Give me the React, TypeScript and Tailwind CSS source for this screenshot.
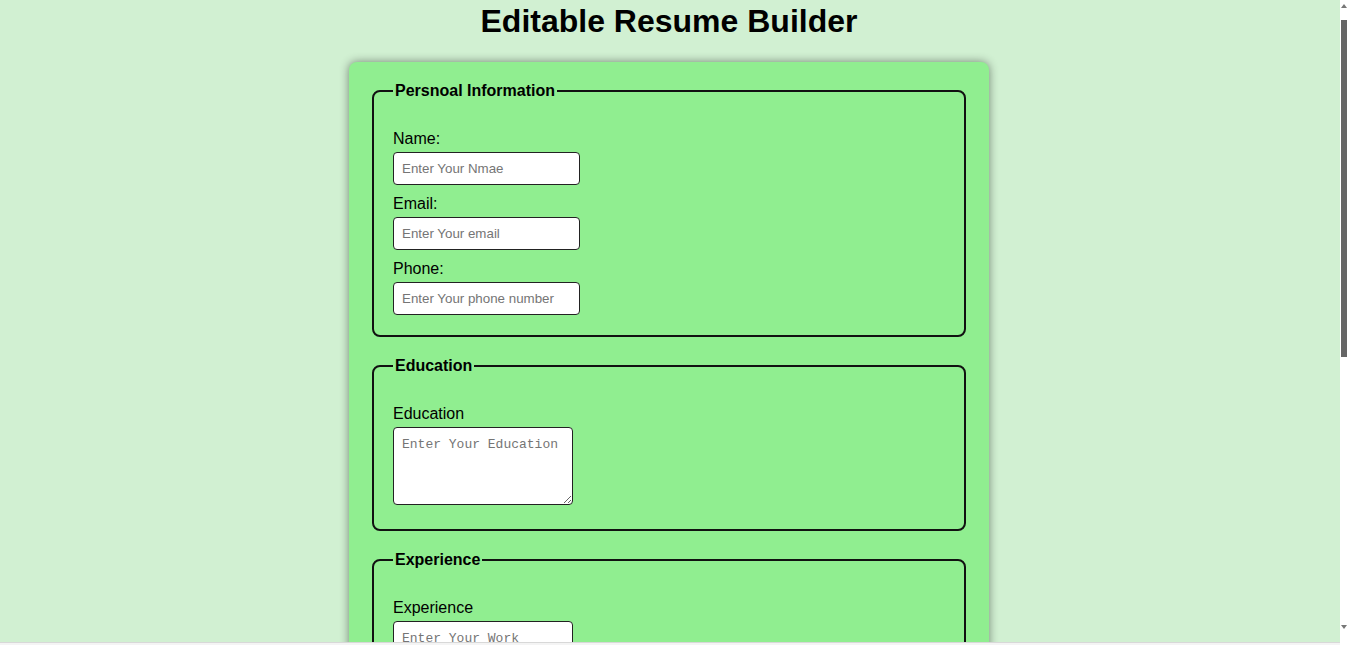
const fieldsetCls = 'mb-5 rounded-lg border-2 border-[#111] px-[19px] pt-[29px] pb-[20px]'
const legendCls = 'px-[2px] text-base leading-[18px] font-bold'
const labelCls = 'mb-[4px] block pt-[1px] text-base leading-[18px]'
const inputCls =
  'block h-[33px] w-[187px] rounded-[4px] border border-[#222] bg-white px-2 text-[13.33px] placeholder:text-[#757575] focus:outline-none'
const areaCls =
  'block h-[78px] w-[180px] resize-y rounded-[4px] border border-[#222] bg-white px-2 pt-[9px] pb-[6px] font-["Liberation_Mono",monospace] text-[13px] leading-[16px] placeholder:text-[#757575] focus:outline-none'

function Field({ label, placeholder, last }: { label: string; placeholder: string; last?: boolean }) {
  return (
    <div className={last ? '' : 'mb-[9px]'}>
      <label className={labelCls}>{label}</label>
      <input className={inputCls} placeholder={placeholder} />
    </div>
  )
}

function AreaField({ label, placeholder }: { label: string; placeholder: string }) {
  return (
    <div className="mb-[4px]">
      <label className={labelCls}>{label}</label>
      <textarea className={areaCls} placeholder={placeholder} />
    </div>
  )
}

export default function App() {
  return (
    <div className="flex h-[645px] overflow-hidden bg-white font-['Liberation_Sans',Arial,sans-serif] text-black">
      <div className="flex flex-1 flex-col">
        <main className="h-[642px] overflow-hidden bg-[#d1f0d2] pr-[2px]">
          <h1 className="pt-[3px] text-center text-[32px] leading-[37px] font-bold">Editable Resume Builder</h1>
          <form className="mx-auto mt-[22px] w-[640px] rounded-lg bg-[#90ee90] px-[23px] pt-[20px] pb-6 shadow-[0_0_10px_rgba(0,0,0,0.45)]">
            <fieldset className={fieldsetCls}>
              <legend className={legendCls}>Persnoal Information</legend>
              <Field label="Name:" placeholder="Enter Your Nmae" />
              <Field label="Email:" placeholder="Enter Your email" />
              <Field label="Phone:" placeholder="Enter Your phone number" last />
            </fieldset>

            <fieldset className={fieldsetCls}>
              <legend className={legendCls}>Education</legend>
              <AreaField label="Education" placeholder="Enter Your Education" />
            </fieldset>

            <fieldset className={fieldsetCls}>
              <legend className={legendCls}>Experience</legend>
              <AreaField label="Experience" placeholder="Enter Your Work Experience" />
            </fieldset>
          </form>
        </main>
        <div className="h-[3px] border-t border-[#d8d8d8] bg-[#f4f4f4]" />
      </div>
      <div className="flex w-[7px] flex-col items-center bg-white">
        <div className="mt-[4px] h-0 w-0 border-x-[3px] border-b-[4px] border-x-transparent border-b-[#777]" />
        <div className="mt-[12px] h-[337px] w-[6px] bg-[#666]" />
        <div className="flex-1" />
        <div className="mb-[16px] h-0 w-0 border-x-[3px] border-t-[4px] border-x-transparent border-t-[#777]" />
      </div>
    </div>
  )
}
